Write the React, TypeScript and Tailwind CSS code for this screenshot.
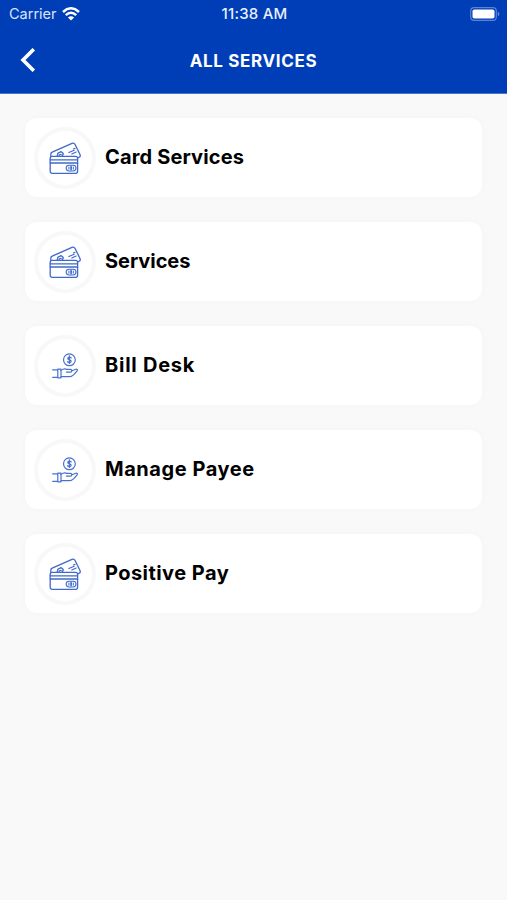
const services = [
    { label: "Card Services", icon: "cards", tracking: "tracking-[0.15px]" },
    { label: "Services", icon: "cards", tracking: "tracking-[-0.05px]" },
    { label: "Bill Desk", icon: "hand", tracking: "tracking-[0.75px]" },
    { label: "Manage Payee", icon: "hand", tracking: "tracking-[0.55px]" },
    { label: "Positive Pay", icon: "cards", tracking: "tracking-[0.45px]" },
];

const CardsIcon = () => (
    <svg className="h-8 w-8" viewBox="0 0 32 32" fill="none" stroke="#3f6acb" strokeWidth="1.3" strokeLinecap="round" strokeLinejoin="round">
        <rect x="1.2" y="14.4" width="27.4" height="16.9" rx="2" />
        <path d="M1.2 17.8h27.4M1.2 21h27.4" />
        <path d="M1.8 14.4V12.3Q1.8 10.9 3.2 10.2L23 1.3Q25.1.5 26.1 2.5L31.1 12.7Q31.8 14.7 29.8 15.5L28.8 15.9" />
        <path d="M8.2 13.9L9 11.2 12.2 9.7 14.3 11.6 13.4 13.9M10.2 13.6a1.2 1.2 0 0 1 2-.9" />
        <path d="M19.8 10.6l5.4-2.4M22.8 12l4.4-2M24.4 7l1.8-.8" strokeWidth="1.1" />
        <rect x="17.2" y="23.2" width="9.8" height="5.8" rx="2.9" strokeWidth="1.1" />
        <path d="M22.1 24.2Q20.7 26.1 22.1 28M22.1 24.2Q23.5 26.1 22.1 28M19.9 25v2.2M24.3 25v2.2" strokeWidth="1" />
    </svg>
);

const HandIcon = () => (
    <svg className="h-[26px] w-[26px]" viewBox="0 0 26 26" fill="none" stroke="#4a72cd" strokeWidth="1.2" strokeLinecap="round" strokeLinejoin="round">
        <circle cx="17.4" cy="6.8" r="5.9" />
        <path d="M19.2 4.9Q17.4 3.5 16 4.8 15.4 6.4 17.4 6.8 19.6 7.4 18.8 8.9 17.3 10 15.5 8.7M17.4 3v7.6" strokeWidth="1.3" />
        <path d="M.7 16.9h5.1M.7 24.4h5.1M5.8 16.2h3.2v8.6H5.8z" />
        <path d="M9 17.4C11.5 15.4 13.5 15.6 15 16.4h3.4c2.2.3 1.8 2.7 0 2.7h-4M19.6 18l4-1.8c1.5-.5 2.4.5 1.4 1.7-2.2 3-4.5 5.8-7.3 5.8H9" />
    </svg>
);

const WifiIcon = () => (
    <svg className="h-[14px] w-[18px]" viewBox="0 0 18 14" fill="none" stroke="white" strokeWidth="2.5">
        <path d="M1 5Q9-2.4 17 5M3.8 8.1Q9 3.3 14.2 8.1" />
        <path d="M9 13.6L5.9 10.5Q9 8 12.1 10.5z" fill="white" stroke="none" />
    </svg>
);

const BatteryIcon = () => (
    <svg className="h-[14px] w-[30px]" viewBox="0 0 30 14" fill="none">
        <rect x=".7" y=".7" width="25.6" height="12.6" rx="3.4" stroke="#5c82d3" strokeWidth="1.2" />
        <rect x="2.5" y="2.5" width="22" height="9" rx="1.8" fill="white" />
        <path d="M27.8 4.8Q29.4 5.6 29.4 7T27.8 9.2z" fill="#6f91d9" />
    </svg>
);

const ServiceRow: React.FC<{
    label: string;
    icon: string;
    tracking: string;
}> = ({ label, icon, tracking }) => (
    <button className="flex h-[79px] w-full items-center rounded-xl bg-white pl-[9px] text-left shadow-[0_0_8px_rgba(0,0,0,0.025)]">
        <span className="flex h-[62px] w-[62px] shrink-0 items-center justify-center rounded-full border-4 border-[#f8f8f8]">
            {icon === "cards" ? <CardsIcon /> : <HandIcon />}
        </span>
        <span className={`mb-px ml-[9px] whitespace-nowrap text-[20px] font-bold leading-6 text-black ${tracking}`}>{label}</span>
    </button>
);

export default function App() {
    return (
        <div className="min-h-[900px] w-full bg-[#f9f9f9] font-['Inter',sans-serif]">
            <header className="h-[94px] border-b border-[#4a74cc] bg-[#003eb8] text-white">
                <div className="grid h-[27px] grid-cols-3 items-center pl-[9px] pr-[7px]">
                    <div className="flex items-center gap-[5px]">
                        <span className="text-[14.5px] leading-5 text-[#d9e4fb]">Carrier</span>
                        <WifiIcon />
                    </div>
                    <span className="text-center text-[15px] font-medium leading-5 tracking-[0.2px] text-[#e8effd]">11:38 AM</span>
                    <div className="flex justify-end">
                        <BatteryIcon />
                    </div>
                </div>
                <div className="grid h-[66px] grid-cols-[60px_1fr_60px] items-center">
                    <button className="pl-5" aria-label="Back">
                        <svg className="h-6 w-4" viewBox="0 0 16 24" fill="none" stroke="white" strokeWidth="3.6">
                            <path d="M13.8 1.2L3 12l10.8 10.8" />
                        </svg>
                    </button>
                    <h1 className="pt-px text-center text-[17px] font-bold leading-6 tracking-[0.65px]">ALL SERVICES</h1>
                </div>
            </header>
            <main className="flex flex-col gap-[25px] pl-[25px] pr-[25px] pt-6">
                {services.map((s) => (
                    <ServiceRow key={s.label} {...s} />
                ))}
            </main>
        </div>
    );
}
